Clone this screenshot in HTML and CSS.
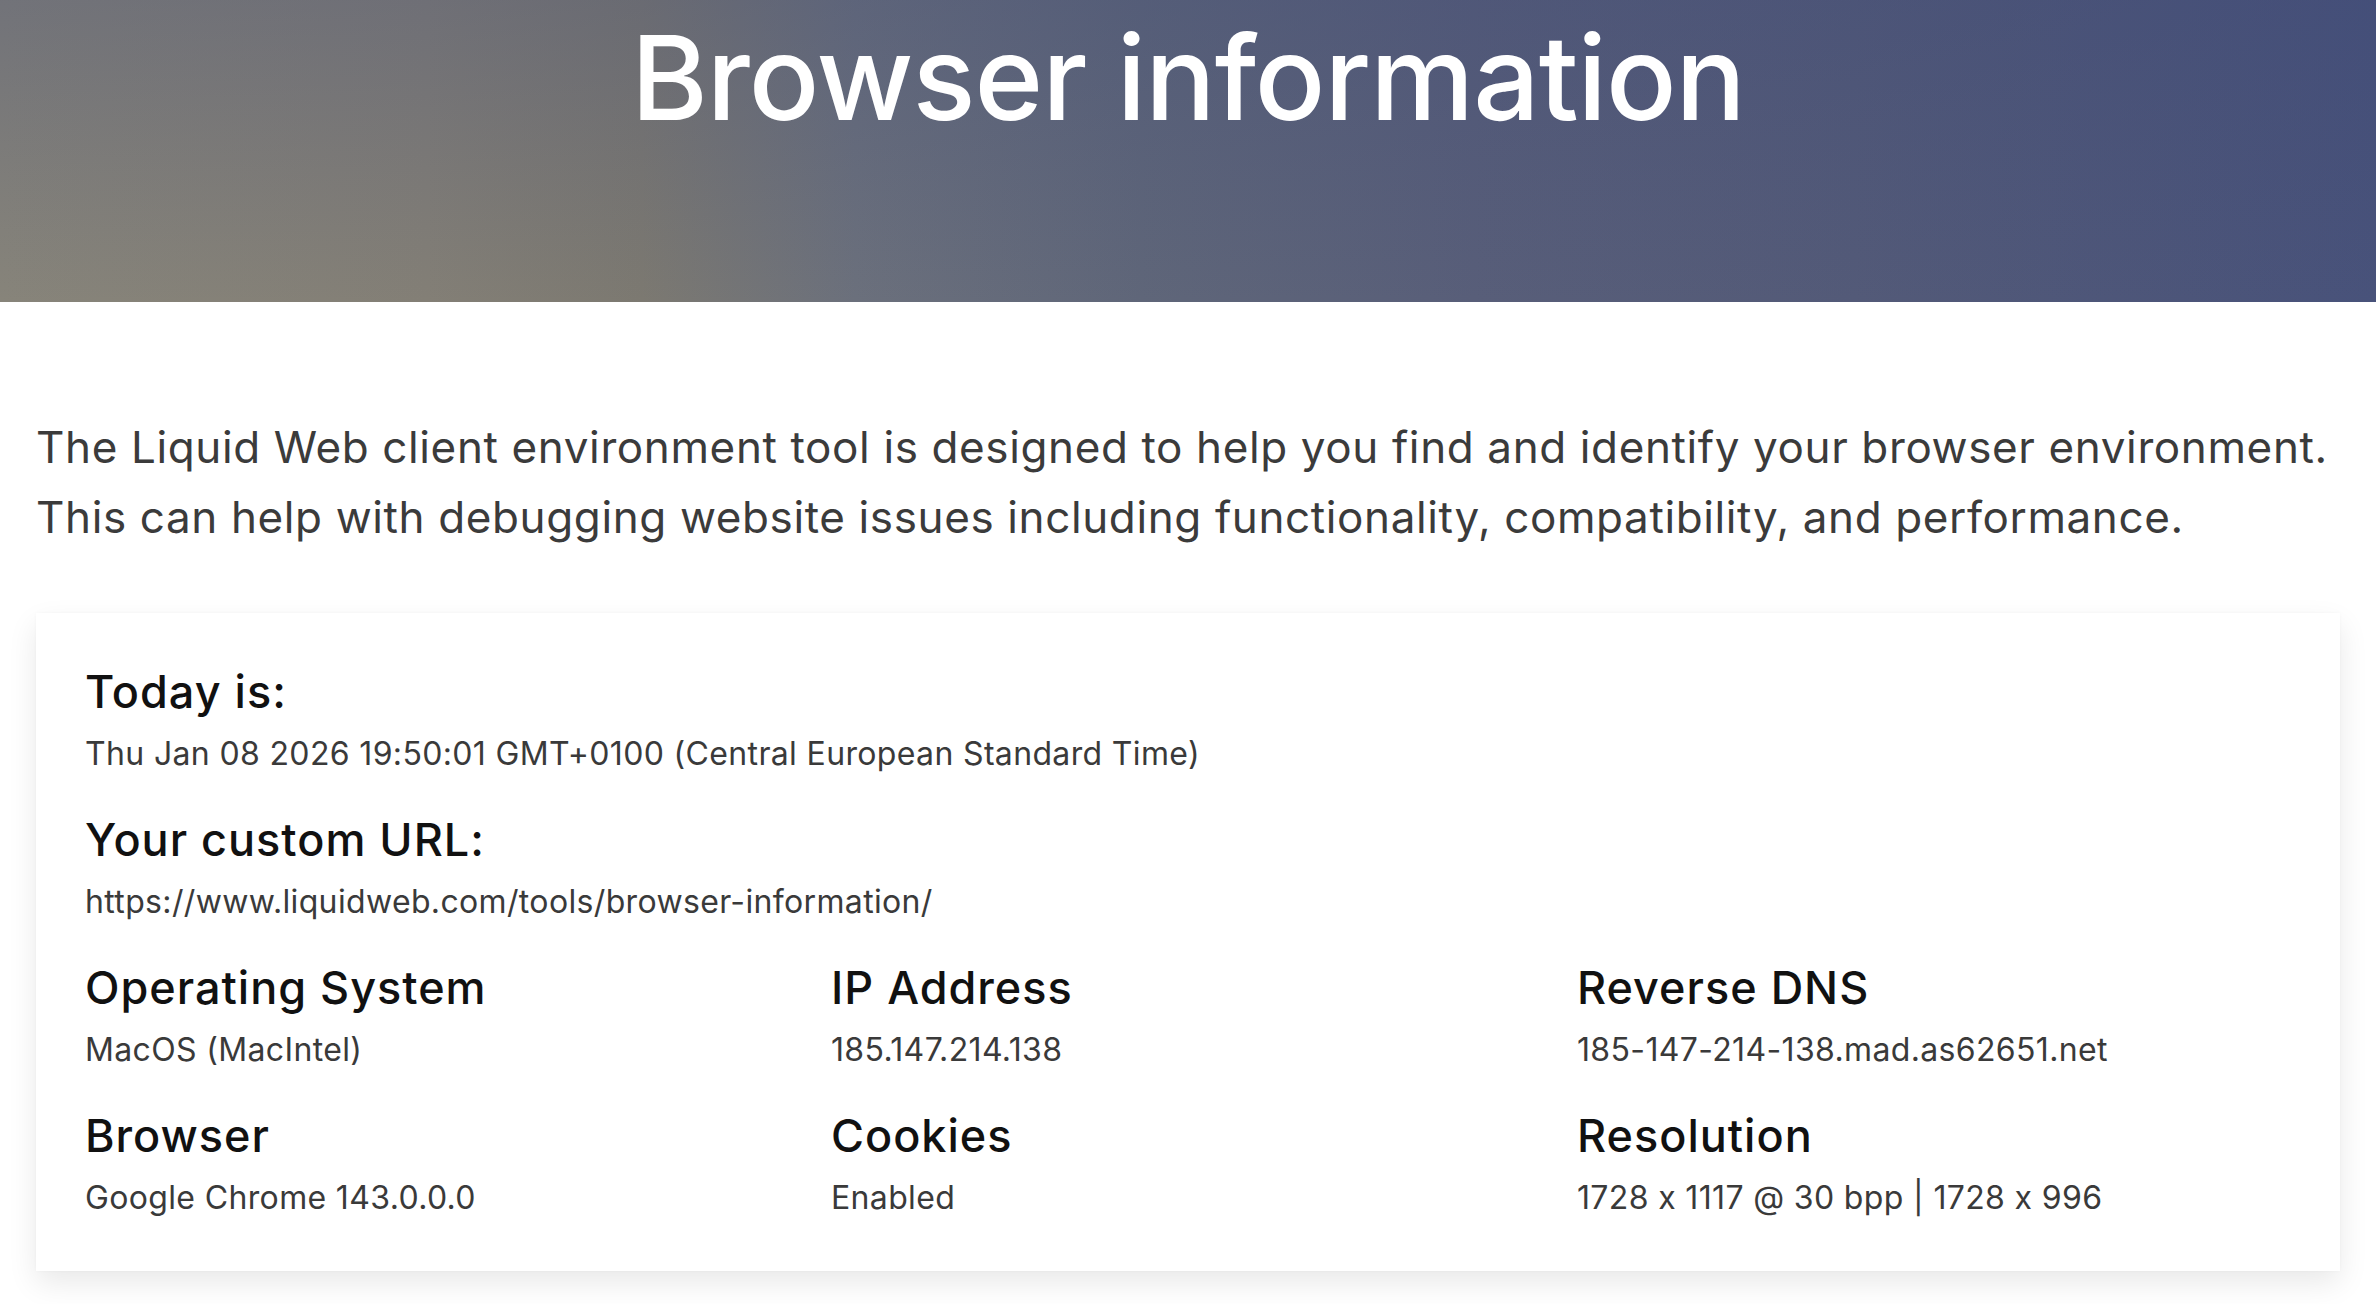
FILE: index.html
```html
<!DOCTYPE html>
<html lang="en">
<head>
<meta charset="utf-8">
<title>Browser information</title>
<link rel="stylesheet" href="styles.css">
</head>
<body>
<header class="hero">
  <h1 class="hero-title">Browser information</h1>
</header>
<main class="content">
  <p class="intro">The Liquid Web client environment tool is designed to help you find and identify your browser environment. This can help with debugging website issues including functionality, compatibility, and performance.</p>
  <section class="card">
    <div class="item">
      <h2 class="label">Today is:</h2>
      <p class="value">Thu Jan 08 2026 19:50:01 GMT+0100 (Central European Standard Time)</p>
    </div>
    <div class="item">
      <h2 class="label">Your custom URL:</h2>
      <p class="value">https://www.liquidweb.com/tools/browser-information/</p>
    </div>
    <div class="grid">
      <div class="item">
        <h2 class="label">Operating System</h2>
        <p class="value">MacOS (MacIntel)</p>
      </div>
      <div class="item">
        <h2 class="label">IP Address</h2>
        <p class="value">185.147.214.138</p>
      </div>
      <div class="item">
        <h2 class="label">Reverse DNS</h2>
        <p class="value">185-147-214-138.mad.as62651.net</p>
      </div>
      <div class="item">
        <h2 class="label">Browser</h2>
        <p class="value">Google Chrome 143.0.0.0</p>
      </div>
      <div class="item">
        <h2 class="label">Cookies</h2>
        <p class="value">Enabled</p>
      </div>
      <div class="item">
        <h2 class="label">Resolution</h2>
        <p class="value">1728 x 1117 @ 30 bpp | 1728 x 996</p>
      </div>
    </div>
  </section>
</main>
</body>
</html>
```

FILE: styles.css
```css
html, body {
  margin: 0;
  padding: 0;
  background: #ffffff;
}

body {
  font-family: Inter, "Liberation Sans", Arial, sans-serif;
  font-feature-settings: "calt" 0;
  color: #3a3a3a;
}

.hero {
  height: 302px;
  box-sizing: border-box;
  padding-top: 19px;
  background:
    linear-gradient(180deg, rgba(58, 70, 118, 0.28) 0%, rgba(58, 70, 118, 0) 100%),
    linear-gradient(90deg, #87847a 0%, #837f76 18%, #7c7971 27%, #6b707c 36%, #5f6679 48%, #585e79 62%, #535a78 78%, #48527a 100%);
  display: flex;
  justify-content: center;
}

.hero-title {
  margin: 0;
  font-size: 117px;
  line-height: 1;
  font-weight: 500;
  color: #ffffff;
  letter-spacing: -1px;
}

.content {
  padding: 110px 36px 40px;
}

.intro {
  margin: 0 0 61px;
  font-size: 44px;
  line-height: 70px;
  color: #3b3b3b;
  font-weight: 400;
  letter-spacing: 0.62px;
}

.card {
  background: #ffffff;
  padding: 52px 49px 49px;
  box-shadow: 0 12px 28px rgba(0, 0, 0, 0.09), 0 0 3px rgba(0, 0, 0, 0.03);
  display: flex;
  flex-direction: column;
  gap: 35px;
}

.grid {
  display: grid;
  grid-template-columns: repeat(3, 1fr);
  column-gap: 32px;
  row-gap: 35px;
}

.item {
  display: flex;
  flex-direction: column;
  gap: 12px;
}

.label {
  margin: 0;
  font-size: 45px;
  line-height: 53px;
  font-weight: 500;
  color: #111111;
  letter-spacing: 1px;
}

.value {
  margin: 0;
  font-size: 32px;
  line-height: 48px;
  color: #3a3a3a;
  letter-spacing: 0.35px;
}
```
